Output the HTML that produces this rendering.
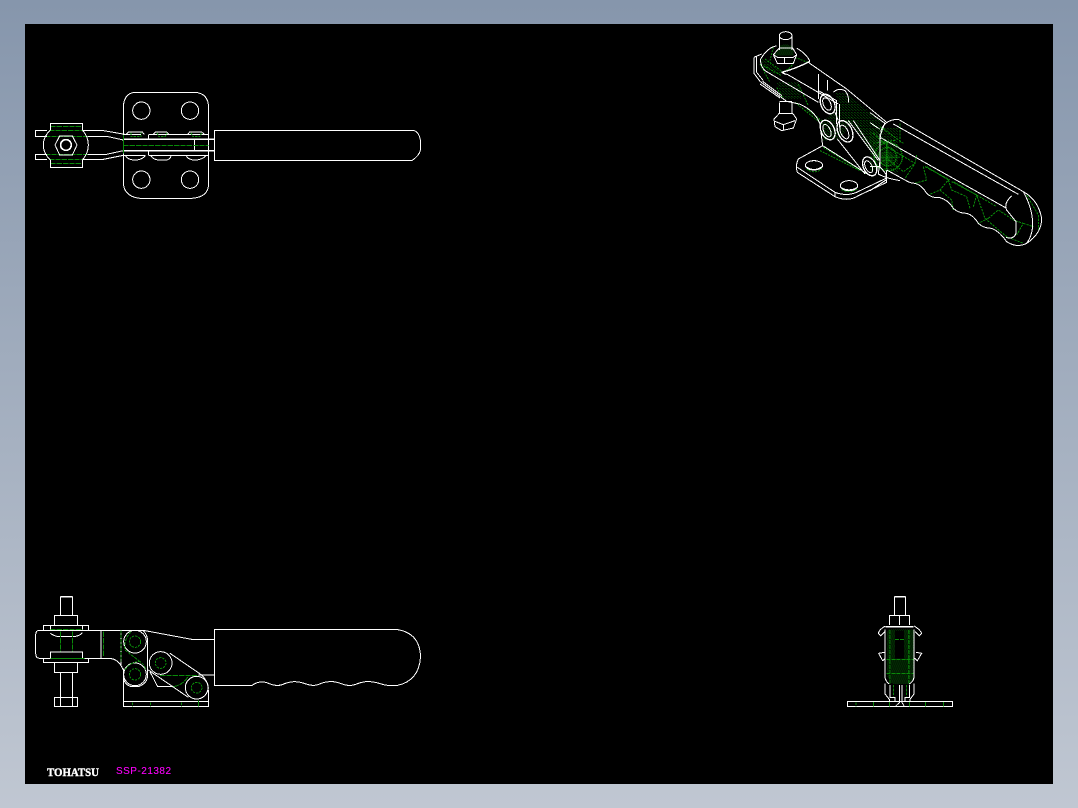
<!DOCTYPE html>
<html>
<head>
<meta charset="utf-8">
<style>
html,body{margin:0;padding:0;width:1078px;height:808px;overflow:hidden;background:linear-gradient(180deg,#8696ac 0%,#c0c7d2 100%);}
#c{position:absolute;left:25px;top:24px;width:1028px;height:760px;background:#000;}
svg{position:absolute;left:0;top:0;}
.w{fill:none;stroke:#fff;stroke-width:3;}
.t{fill:none;stroke:#fff;stroke-width:5;}
.g{fill:none;stroke:#0a8a0a;stroke-width:3;stroke-dasharray:16 3;}
.h{fill:none;stroke:#0a8a0a;stroke-width:3;stroke-dasharray:7 3;}
.s{fill:none;stroke:#0a8a0a;stroke-width:3;}
</style>
</head>
<body>
<div id="c"></div>
<svg width="1078" height="808" viewBox="0 0 1078 808" shape-rendering="crispEdges">
<defs>
  <pattern id="m" width="9" height="8" patternUnits="userSpaceOnUse">
    <rect x="0" y="0" width="3" height="1" fill="#0a8a0a"/>
    <rect x="5" y="1" width="1" height="3" fill="#0a8a0a"/>
    <rect x="1" y="3" width="1" height="2" fill="#0a8a0a"/>
    <rect x="2" y="6" width="4" height="1" fill="#0a8a0a"/>
    <rect x="8" y="4" width="1" height="1" fill="#0a8a0a"/>
  </pattern>
  <pattern id="d" width="6" height="5" patternUnits="userSpaceOnUse">
    <rect x="0" y="0" width="2" height="1" fill="#0a8a0a"/>
    <rect x="3" y="1" width="1" height="2" fill="#0a8a0a"/>
    <rect x="0" y="2" width="1" height="2" fill="#0a8a0a"/>
    <rect x="4" y="4" width="2" height="1" fill="#0a8a0a"/>
  </pattern>
</defs>

<!-- TOP VIEW -->
<g transform="translate(25 80) scale(.33333)">
  <path class="w" d="M330 37H510Q551 40 551 85V310Q551 352 500 355H345Q295 350 295 305V85Q295 40 330 37Z"/>
  <circle class="w" cx="349" cy="92" r="26"/><circle class="w" cx="495" cy="92" r="26"/>
  <circle class="w" cx="349" cy="299" r="26"/><circle class="w" cx="495" cy="299" r="26"/>
  <path class="g" d="M76 140H172M72 151H178M60 169H188M60 224H188M72 238H178M76 251H172"/>
  <path class="w" d="M76 150V130H172V150M76 240V262H172V240"/>
  <path class="w" d="M76 150Q55 170 55 195Q55 220 76 240M172 150Q190 170 190 195Q190 220 172 240"/>
  <path class="w" d="M66 151H32V169H66M66 224H32V238H66"/>
  <path class="w" d="M172 151H230L300 163M188 169H245L295 180M188 224H240L295 212M172 238H235L295 226"/>
  <path class="w" d="M104 168H142L156 195L142 225H104L90 195Z"/>
  <circle class="t" cx="123" cy="195" r="16"/>
  <path class="t" d="M295 178H568M295 212H568"/>
  <path class="w" d="M295 163H348M372 163H550M295 226H362M372 226H550M370 163V180M370 212V226M508 178V212M550 163V226"/>
  <path class="g" d="M295 196H551"/>
  <path class="s" d="M295 165V220"/>
  <path class="w" d="M304 163L310 156H352L358 163M385 163L392 156H425L432 163M488 163L494 156H530L538 163"/>
  <path class="h" d="M318 158V170H348V158M396 158L402 170H420L426 158M498 158L504 170H525L530 158"/>
  <path class="w" d="M302 228Q310 240 330 240T360 228M378 228Q385 240 405 240H425Q435 238 438 228M484 228Q490 240 510 240T542 228"/>
</g>
<path fill="none" stroke="#fff" d="M214.5 130.5H414Q420 133 420.5 142V150Q419 156 412 160.5H214.5Z"/>

<!-- SIDE VIEW -->
<g transform="translate(25 590) scale(.33333)">
  <path class="t" d="M106 20H142" />
  <path class="w" d="M106 20V76M142 20V76"/>
  <path class="w" d="M88 105V76H158V105"/>
  <path class="w" d="M55 120V107H190V120M76 107V120M172 107V120"/>
  <path class="w" d="M172 121H355L500 148H568M228 121V205M40 121H172"/>
  <path class="w" d="M42 121Q32 122 32 135V190Q32 205 44 205H250Q285 205 298 250"/>
  <path class="w" d="M76 130Q90 140 105 140H145Q165 138 172 128"/>
  <path class="g" d="M76 119H172M106 125V186M142 125V186M235 125V200"/>
  <path class="w" d="M76 205V186H172V205M76 205H55V217H190V205"/>
  <path class="s" d="M76 205H178"/>
  <path class="w" d="M88 217V247H158V217M106 247V322M142 247V322"/>
  <path class="w" d="M88 322H158V350H88ZM106 322V350M142 322V350"/>
  <path class="w" d="M288 121V225"/>
  <path class="s" d="M288 121V215" stroke-dasharray="10 3"/>
  <path class="w" d="M355 122Q368 135 368 155V255Q368 280 340 290H320Q295 285 295 255V240"/>
  <circle class="w" cx="330" cy="155" r="34"/>
  <circle class="h" cx="330" cy="155" r="17"/>
  <circle class="w" cx="330" cy="253" r="34"/>
  <circle class="h" cx="330" cy="253" r="17"/>
  <path class="s" d="M318 125Q295 150 300 180L345 215M300 240Q315 215 345 215Q360 225 362 240" stroke-dasharray="9 3"/>
  <circle class="w" cx="407" cy="219" r="34"/>
  <circle class="h" cx="407" cy="219" r="16"/>
  <circle class="w" cx="515" cy="293" r="34"/>
  <circle class="h" cx="515" cy="293" r="16"/>
  <path class="w" d="M435 190L530 255Q550 275 550 295M370 240L490 322M375 245L398 290H445"/>
  <path class="g" d="M405 256H520M445 290Q475 285 490 258"/>
  <path class="w" d="M520 255H568M295 235V350H551V300M295 335H551"/>
  <path class="h" d="M322 338V350M376 338V350M469 338V350"/>
  <path class="s" d="M520 332V350"/>
</g>
<path fill="none" stroke="#fff" d="M214.500 629.500H397Q420 633 420.500 657Q419 681 397 685.500C388 686 384 685 378 683C370 681 365 681 358 683.500C352 686 348 686 342 684C335 681 328 681 322 683C316 686 312 686 306 684C298 681 292 681 285 683.500C280 686 276 686 270 684C264 681 258 681 252 685.500H214.500Z"/>

<!-- FRONT VIEW -->
<g transform="translate(840 590) scale(.33333)">
  <path d="M145 118H222V250Q220 275 205 282H160Q145 275 140 250V130Z" fill="url(#d)"/>
  <path d="M165 122H192V205H165Z" fill="#000"/>
  <path class="s" d="M150 120V280M207 120V280M165 148H192M140 208H220M140 250H220" stroke-dasharray="12 3"/>
  <path class="t" d="M163 20H197"/>
  <path class="w" d="M163 20V76M197 20V76M148 105V76H208V105M178 76V105"/>
  <path class="t" d="M137 110H220"/>
  <path class="w" d="M135 118V262Q137 275 148 282M222 118V262Q220 275 208 282"/>
  <path class="w" d="M136 108Q118 118 115 130L122 137L135 125M222 108Q240 118 245 130L238 137L225 125M133 187L116 190L128 212L136 205M228 187L245 190L232 212L224 205"/>
  <path class="w" d="M135 280V312L148 328V334M150 285V322H165V334M222 280V312L210 328V334M208 285V322H195V334M178 285V338L168 347M186 285V338L192 347"/>
  <path class="s" d="M160 285V320M200 285V320" stroke-dasharray="8 3"/>
  <path class="w" d="M22 334H338V350H22Z"/>
  <path class="h" d="M48 338V350"/>
  <path class="s" d="M100 336V349M148 336V349M208 336V349M256 336V349M310 336V349"/>
</g>

<!-- ISO: handle -->
<g transform="translate(870 100) scale(.33333)">
  <path class="s" stroke-dasharray="7 3" d="M30 190L50 175L100 215L135 190M10 100L60 145L135 190M10 130L80 120M30 80L100 130M90 70V130M140 165L135 190L105 235M160 200L170 240L135 250M170 200L235 240L210 270L175 285M235 240L245 270L290 290L300 325M210 270L245 300L250 330M245 245L320 285L345 355M320 285L310 320M355 355L385 330L430 360L460 370L440 405M345 355L380 385L410 410L460 430M355 355L325 370M460 370L490 380M470 285L505 345V390M165 200L240 240M250 245L380 320"/>
  <g class="s" stroke-dasharray="4 2" style="stroke-width:4">
    <circle cx="55" cy="170" r="42"/><circle cx="52" cy="170" r="27"/>
    <path d="M10 172H90M50 125V215"/>
  </g>
  <circle cx="50" cy="172" r="20" fill="url(#d)"/>
  <path d="M0 80L30 100V200L0 215Z" fill="url(#m)"/>
  <path class="w" d="M0 38L45 70M0 68L30 88M85 58L460 275Q505 300 515 355Q515 400 470 430Q440 445 410 425Q390 395 365 385Q340 385 325 370Q310 345 290 340Q265 340 250 325Q235 300 210 293Q185 295 170 280Q155 255 135 250Q120 250 105 240L50 210"/>
  <path class="w" d="M70 72L445 283M30 112L410 325M85 58Q50 58 35 85Q28 110 30 200L48 222V240L0 272"/>
  <path class="w" d="M425 288Q400 310 410 330L438 365V400Q430 420 408 412M460 275Q490 330 488 380Q485 410 470 430"/>
  <path class="w" d="M30 200H0"/>
  <path class="w" d="M45 70Q35 90 30 112"/>
</g>

<!-- ISO: clamp head and linkage -->
<g transform="translate(740 24) scale(.33333)">
  <path d="M120 65Q140 55 160 70V95H100Z" fill="url(#d)"/>
  <path d="M110 175H175L185 225L130 225Z" fill="url(#m)"/>
  <path d="M65 100L125 145L100 150L60 125Z" fill="url(#m)"/>
  <path d="M285 205L320 205L425 295L420 420L400 400L340 290L300 345L250 350L245 300L300 240Z" fill="url(#m)"/>
  <path d="M300 260L340 280L400 330L415 400L360 330L330 295Z" fill="url(#m)"/>
  <path d="M425 310L475 310V450L425 430Z" fill="url(#m)"/>
  <g class="s" stroke-dasharray="6 3" style="stroke-width:3">
    <path d="M100 70L90 110M75 105L130 145M70 125L125 155M60 120L90 175M110 190L130 225M175 180L205 245"/>
    <path d="M165 100L210 118M160 115Q150 140 120 145"/>
    <path d="M165 235L245 300M200 255L245 290M250 370L380 450M240 380L360 440"/>
    <path d="M200 435Q225 452 245 435M305 497Q330 510 352 495"/>
  </g>
  <path class="w" d="M118 35A19 12 0 1 1 156 35A19 12 0 1 1 118 35M118 35V78M156 35V78"/>
  <path class="w" d="M100 92L118 72H158L170 92L160 118H112ZM100 92L112 100H160L170 92M134 100V118"/>
  <path class="w" d="M62 105Q85 68 110 66M170 72Q200 90 210 112M205 115L320 195L440 295"/>
  <path class="w" d="M42 100L65 90M42 100V148L60 172L140 232L178 240Q225 260 240 300L248 365"/>
  <path class="w" d="M50 98V145L70 170M62 105Q60 125 75 140L235 235M60 180L120 222M68 172L125 215"/>
  <path class="t" style="stroke-width:4" d="M125 145Q165 135 210 112M125 145L140 152"/>
  <path class="w" d="M140 150L295 240M235 150V225M262 168V200M235 200L290 230V300"/>
  <path class="w" d="M118 235V268M156 235V268M118 232H156"/>
  <path class="w" d="M102 285L118 268H158L170 285L160 312L125 320L105 308ZM105 292L130 302L165 290M130 302V320"/>
  <ellipse class="t" style="stroke-width:4" cx="263" cy="240" rx="20" ry="31" transform="rotate(-25 263 240)"/>
  <ellipse class="w" cx="261" cy="240" rx="11" ry="20" transform="rotate(-25 261 240)"/>
  <path class="w" d="M280 205Q295 190 315 200Q328 215 325 235M285 265L295 290"/>
  <ellipse class="t" style="stroke-width:4" cx="263" cy="318" rx="20" ry="31" transform="rotate(-25 263 318)"/>
  <ellipse class="w" cx="261" cy="320" rx="10" ry="20" transform="rotate(-25 261 320)"/>
  <ellipse class="t" style="stroke-width:4" cx="315" cy="322" rx="21" ry="34" transform="rotate(-25 315 322)"/>
  <ellipse class="w" cx="313" cy="324" rx="11" ry="22" transform="rotate(-25 313 324)"/>
  <ellipse class="t" style="stroke-width:4" cx="389" cy="427" rx="19" ry="30" transform="rotate(-25 389 427)"/>
  <ellipse class="w" cx="386" cy="428" rx="10" ry="19" transform="rotate(-25 386 428)"/>
  <path class="w" d="M298 240V310M325 290L415 410M292 345L375 450M340 290L420 410L415 450"/>
  <path class="w" d="M248 365L175 405Q165 425 172 445L285 518Q325 535 355 515L440 475V440M248 365L390 455M172 430L285 505Q325 520 360 500L440 462"/>
  <path class="w" d="M285 505V518"/>
  <ellipse class="w" cx="222" cy="424" rx="26" ry="14"/><path class="w" d="M198 428Q222 445 246 428"/>
  <ellipse class="w" cx="327" cy="485" rx="26" ry="15"/><path class="w" d="M302 490Q327 505 352 490"/>
  <path class="w" d="M415 450Q435 462 480 470M420 330V430"/>
</g>

<text x="47" y="776" font-family="'Liberation Serif',serif" font-weight="700" font-size="12" fill="#fff" stroke="#fff" stroke-width=".4" textLength="52" lengthAdjust="spacingAndGlyphs">TOHATSU</text>
<text x="116" y="774" font-family="'Liberation Sans',sans-serif" font-size="10" fill="#f0f" stroke="#f0f" stroke-width=".1" textLength="55" lengthAdjust="spacing">SSP-21382</text>
</svg>
</body>
</html>
